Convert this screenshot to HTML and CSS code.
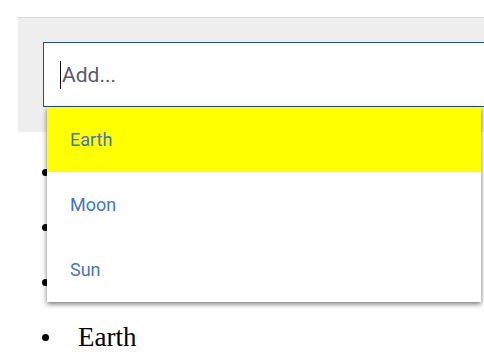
FILE: index.html
```html
<!DOCTYPE html>
<html>
<head>
<meta charset="utf-8">
<link rel="stylesheet" href="styles.css">
</head>
<body>
<div class="panel">
  <div class="combo">
    <div class="input"><span class="caret"></span><span class="placeholder">Add...</span></div>
    <ul class="dropdown">
      <li class="option active">Earth</li>
      <li class="option">Moon</li>
      <li class="option">Sun</li>
    </ul>
  </div>
</div>
<ul class="items">
  <li>Earth</li>
  <li>Moon</li>
  <li>Sun</li>
  <li>Earth</li>
</ul>
</body>
</html>
```
FILE: styles.css
```css
html, body {
  margin: 0;
  padding: 0;
  overflow: hidden;
  background: #fff;
  width: 484px;
  height: 364px;
}
body {
  font-family: "Liberation Serif", serif;
}
.panel {
  margin: 17px 0 0 18px;
  width: 540px;
  background: #eeeeee;
  border-top: 1px solid #d9d9d9;
  padding: 24px 0 25px 25px;
}
.combo {
  position: relative;
}
.input {
  height: 63px;
  border: 1px solid #2b4d8c;
  background: #fff;
  display: flex;
  align-items: center;
  padding-left: 16px;
  font-family: Roboto, "Liberation Sans", sans-serif;
  font-size: 21px;
  color: #5a5a66;
}
.caret {
  display: inline-block;
  width: 1px;
  height: 28px;
  background: #111;
  margin-right: 1px;
}
.dropdown {
  position: absolute;
  top: 65px;
  left: 4px;
  width: 434px;
  margin: 0;
  padding: 0;
  list-style: none;
  background: #fff;
  box-shadow: 0 2px 5px rgba(0, 0, 0, 0.55);
  z-index: 2;
}
.option {
  height: 65px;
  display: flex;
  align-items: center;
  padding-left: 23px;
  font-family: Roboto, "Liberation Sans", sans-serif;
  font-size: 18px;
  color: #4676b8;
}
.option.active {
  background: #ffff00;
}
.items {
  list-style: none;
  margin: 13px 0 0;
  padding: 0 0 0 42px;
  font-size: 27px;
}
.items li {
  height: 55px;
  display: flex;
  align-items: center;
}
.items li::before {
  content: "";
  width: 7px;
  height: 7px;
  border-radius: 50%;
  background: #000;
  margin-right: 29px;
}
```
